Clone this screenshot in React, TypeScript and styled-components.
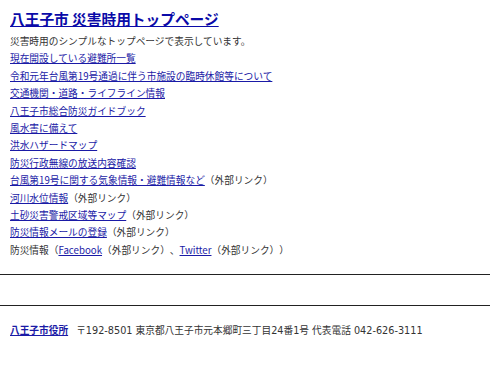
import React from "react";
import styled, { createGlobalStyle } from "styled-components";

const GlobalStyle = createGlobalStyle`
  body {
    margin: 0;
    background: #fff;
    font-family: "Noto Sans CJK JP", "Noto Sans", sans-serif;
    color: #333;
    text-spacing-trim: space-all;
  }
`;

interface Item {
  label: string;
  external?: boolean;
}

const items: Item[] = [
  { label: "現在開設している避難所一覧" },
  { label: "令和元年台風第19号通過に伴う市施設の臨時休館等について" },
  { label: "交通機関・道路・ライフライン情報" },
  { label: "八王子市総合防災ガイドブック" },
  { label: "風水害に備えて" },
  { label: "洪水ハザードマップ" },
  { label: "防災行政無線の放送内容確認" },
  { label: "台風第19号に関する気象情報・避難情報など", external: true },
  { label: "河川水位情報", external: true },
  { label: "土砂災害警戒区域等マップ", external: true },
  { label: "防災情報メールの登録", external: true },
];

const App: React.FC = () => {
  return (
    <Page>
      <GlobalStyle />
      <Main>
        <Title>
          <TitleLink href="#">八王子市 災害時用トップページ</TitleLink>
        </Title>
        <Lead>災害時用のシンプルなトップページで表示しています。</Lead>
        <List>
          {items.map((item) => (
            <Row key={item.label}>
              <Link href="#">{item.label}</Link>
              {item.external && "（外部リンク）"}
            </Row>
          ))}
          <Row>
            防災情報（<Link href="#">Facebook</Link>（外部リンク）、
            <Link href="#">Twitter</Link>（外部リンク））
          </Row>
        </List>
      </Main>
      <Rule />
      <Spacer />
      <Rule />
      <Footer>
        <Link href="#" bold>
          八王子市役所
        </Link>
        <Address>〒192-8501 東京都八王子市元本郷町三丁目24番1号 代表電話 042-626-3111</Address>
      </Footer>
    </Page>
  );
};

const Page = styled.div`
  display: flex;
  flex-direction: column;
  min-height: 378px;
`;

const Main = styled.div`
  padding: 9px 10px 15px;
`;

const Title = styled.h1`
  margin: 0 0 4px;
  font-size: 14.7px;
  line-height: 20px;
  font-weight: bold;
`;

const TitleLink = styled.a`
  color: #0a0aa8;
  text-decoration: underline;
`;

const Lead = styled.p`
  margin: 0;
  font-size: 9.7px;
  line-height: 17.4px;
`;

const List = styled.ul`
  list-style: none;
  margin: 0;
  padding: 0;
`;

const Row = styled.li`
  font-size: 9.7px;
  line-height: 17.4px;
  white-space: nowrap;
`;

const Link = styled.a<{ bold?: boolean }>`
  color: #1a1aa6;
  text-decoration: underline;
  font-weight: ${(p) => (p.bold ? "bold" : "normal")};
`;

const Rule = styled.hr`
  margin: 0;
  border: 0;
  border-top: 1px solid #222;
`;

const Spacer = styled.div`
  height: 30px;
`;

const Footer = styled.footer`
  display: flex;
  align-items: center;
  gap: 8px;
  padding: 16px 10px 0;
  font-size: 9.7px;
  line-height: 17px;
`;

const Address = styled.span`
  color: #333;
  font-family: "DejaVu Sans", "Noto Sans CJK JP", sans-serif;
`;

export default App;
